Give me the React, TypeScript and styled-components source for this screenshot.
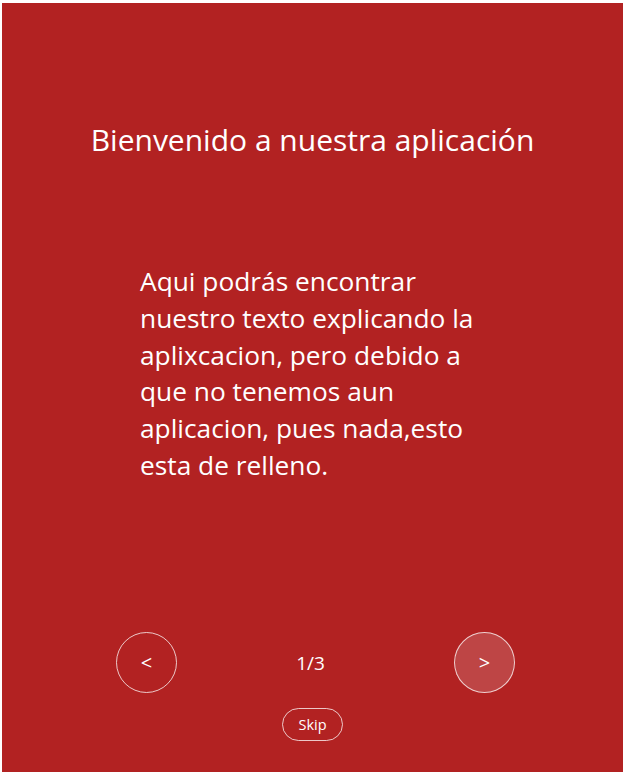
import React from "react";
import styled, { createGlobalStyle } from "styled-components";

const GlobalStyle = createGlobalStyle`
  html, body {
    margin: 0;
    padding: 0;
    background: #ffffff;
  }
  * { box-sizing: border-box; }
`;

const Page = styled.div`
  padding: 3px 0 0 2px;
  min-height: 100vh;
  display: flex;
  flex-direction: column;
`;

const Panel = styled.section`
  flex: 1;
  background: #b22222;
  color: #ffffff;
  font-family: "Open Sans", "Noto Sans", sans-serif;
  display: flex;
  flex-direction: column;
  align-items: center;
  padding: 118px 0 31px;
`;

const Title = styled.h1`
  margin: 0;
  font-size: 30px;
  font-weight: 400;
  line-height: 37px;
`;

const Body = styled.p`
  margin: 105px 0 0;
  width: 345px;
  font-size: 26.3px;
  line-height: 36.8px;
`;

const Spacer = styled.div`
  flex: 1;
`;

const NavRow = styled.div`
  width: 399px;
  margin-left: 6px;
  display: flex;
  align-items: center;
  justify-content: space-between;
`;

const CircleButton = styled.button<{ $active?: boolean }>`
  width: 61px;
  height: 61px;
  border-radius: 50%;
  border: 1.5px solid rgba(255, 255, 255, 0.75);
  background: ${(p) => (p.$active ? "rgba(255,255,255,0.16)" : "transparent")};
  color: #ffffff;
  font-family: "Open Sans", sans-serif;
  font-size: 20px;
  display: flex;
  align-items: center;
  justify-content: center;
  padding: 0;
  cursor: pointer;
`;

const Counter = styled.span`
  font-size: 19px;
  line-height: 24px;
  margin-right: 10px;
`;

const SkipButton = styled.button`
  margin-top: 15px;
  width: 61px;
  height: 33px;
  border-radius: 17px;
  border: 1.5px solid rgba(255, 255, 255, 0.75);
  background: transparent;
  color: #ffffff;
  font-family: "Open Sans", sans-serif;
  font-size: 14.5px;
  padding: 0;
  cursor: pointer;
`;

export default function App() {
  return (
    <>
      <GlobalStyle />
      <Page>
        <Panel>
          <Title>Bienvenido a nuestra aplicación</Title>
          <Body>
            Aqui podrás encontrar nuestro texto explicando la aplixcacion, pero
            debido a que no tenemos aun aplicacion, pues nada,esto esta de
            relleno.
          </Body>
          <Spacer />
          <NavRow>
            <CircleButton>&lt;</CircleButton>
            <Counter>1/3</Counter>
            <CircleButton $active>&gt;</CircleButton>
          </NavRow>
          <SkipButton>Skip</SkipButton>
        </Panel>
      </Page>
    </>
  );
}
